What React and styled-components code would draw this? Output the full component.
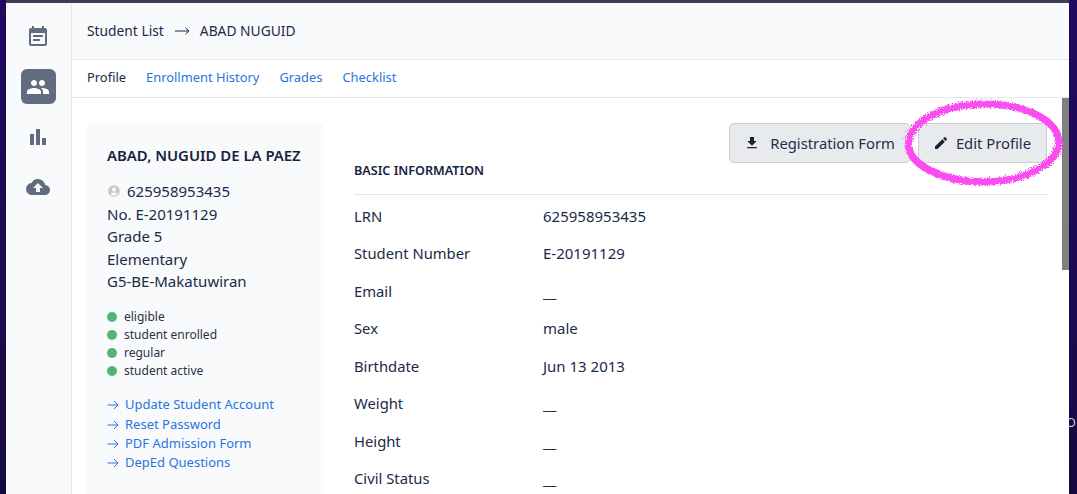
import React from 'react';
import styled, { createGlobalStyle } from 'styled-components';
import { MdEventNote, MdPeople, MdBarChart, MdCloudUpload, MdFileDownload, MdEdit, MdAccountCircle } from 'react-icons/md';

const GlobalStyle = createGlobalStyle`
  html, body {
    margin: 0;
    height: 100%;
    overflow: hidden;
    background: #1f0a55;
    font-family: "Noto Sans", "Open Sans", sans-serif;
    color: #1a2b47;
  }
  * { box-sizing: border-box; }
`;

const Desktop = styled.div`
  width: 1077px;
  height: 494px;
  position: relative;
  overflow: hidden;
  background: linear-gradient(180deg, #22085f 0%, #1c0a50 60%, #16093f 100%);
`;

const TopStrip = styled.div`
  height: 3px;
  margin: 0 8px 0 6px;
  background: #453a55;
`;

const Window = styled.div`
  display: flex;
  width: 1063px;
  height: 491px;
  margin-left: 6px;
  background: #fff;
`;

const Sidebar = styled.nav`
  width: 66px;
  flex-shrink: 0;
  background: #f9fafc;
  border-right: 1px solid #e6e7eb;
  display: flex;
  flex-direction: column;
  align-items: center;
  gap: 15px;
  padding-top: 16px;
  padding-right: 1px;
`;

const SideItem = styled.div`
  width: 35px;
  height: 35px;
  border-radius: 6px;
  display: flex;
  align-items: center;
  justify-content: center;
  color: ${p => (p.$active ? '#fff' : '#626c7f')};
  background: ${p => (p.$active ? '#626c7f' : 'transparent')};
  font-size: 24px;
`;

const Main = styled.div`
  flex: 1;
  min-width: 0;
  display: flex;
  flex-direction: column;
`;

const Header = styled.header`
  height: 57px;
  flex-shrink: 0;
  background: #f9fafc;
  border-bottom: 1px solid #e6e7eb;
  display: flex;
  align-items: center;
  padding: 0 15px 2px;
  font-size: 13.8px;
`;

const Arrow = styled.svg`
  width: 15px;
  height: 10px;
  margin: 2px 10px 0 11px;
  color: #1a2b47;
`;

const Tabs = styled.div`
  height: 38px;
  flex-shrink: 0;
  border-bottom: 1px solid #e6e7eb;
  display: flex;
  align-items: center;
  gap: 20px;
  padding: 0 15px 4px;
  font-size: 12.9px;
`;

const Tab = styled.a`
  color: ${p => (p.$active ? '#1a2b47' : '#2b74e0')};
`;

const Content = styled.div`
  flex: 1;
  min-height: 0;
  position: relative;
  display: flex;
  gap: 30px;
  padding: 25px 0 0 15px;
  overflow: hidden;
`;

const Card = styled.aside`
  width: 237px;
  height: 420px;
  flex-shrink: 0;
  background: #f9fafc;
  border-radius: 6px;
  padding: 0 20px;
`;

const CardName = styled.h2`
  margin: 22px 0 15px;
  font-size: 14.9px;
  line-height: 20px;
  font-weight: 600;
  color: #14233c;
`;

const InfoLine = styled.div`
  display: flex;
  align-items: center;
  font-size: 15px;
  line-height: 22.5px;
`;

const LrnIcon = styled(MdAccountCircle)`
  font-size: 14px;
  color: #c5c8ce;
  margin-right: 6px;
`;

const Badges = styled.ul`
  list-style: none;
  margin: 15px 0 0;
  padding: 0;
  display: flex;
  flex-direction: column;
`;

const Badge = styled.li`
  display: flex;
  align-items: center;
  gap: 7px;
  height: 18px;
  font-size: 12px;
  color: #2a3242;
  &::before {
    content: '';
    width: 10px;
    height: 10px;
    border-radius: 50%;
    background: #4fb774;
  }
`;

const Actions = styled.div`
  margin-top: 15px;
  display: flex;
  flex-direction: column;
`;

const ActionLink = styled.a`
  display: flex;
  align-items: center;
  gap: 6px;
  height: 19.4px;
  font-size: 13px;
  color: #2b74e0;
`;

const SmallArrow = styled.svg`
  width: 12px;
  height: 10px;
  margin-top: 2px;
  color: #2b74e0;
`;

const Details = styled.section`
  width: 693px;
  flex-shrink: 0;
`;

const ButtonRow = styled.div`
  display: flex;
  justify-content: flex-end;
  gap: 7px;
  height: 40px;
`;

const Button = styled.button`
  height: 40px;
  display: flex;
  align-items: center;
  gap: ${p => p.$gap}px;
  padding: 0 15px 0 14px;
  background: #e9eaee;
  border: 1px solid #c9ccd2;
  border-radius: 5px;
  font-family: inherit;
  font-size: 14.8px;
  color: #1f2f4b;
  svg { font-size: 16px; color: #14233c; }
`;

const SectionTitle = styled.h3`
  margin: -1px 0 0;
  height: 33px;
  border-bottom: 1px solid #e4e5e8;
  font-size: 12.6px;
  line-height: 17px;
  font-weight: 600;
  color: #14233c;
`;

const Rows = styled.div`
  padding-top: 2px;
`;

const Row = styled.div`
  display: grid;
  grid-template-columns: 189px 1fr;
  height: 37.5px;
  align-items: center;
  font-size: 14.8px;
`;

const Value = styled.div`
  font-size: 15px;
  transform: translateY(${p => (p.$empty ? '1px' : '0')});
`;

const Scrollbar = styled.div`
  position: absolute;
  top: 0;
  right: 0;
  width: 7px;
  height: 172px;
  background: #808080;
`;

const Scribble = styled.svg`
  position: absolute;
  left: 895px;
  top: 90px;
  width: 180px;
  height: 105px;
  pointer-events: none;
`;

const EdgeGlyph = styled.span`
  position: absolute;
  left: 1069px;
  top: 414px;
  width: 7px;
  font-size: 13px;
  line-height: 16px;
  overflow: hidden;
  color: #c8c6cf;
  direction: rtl;
`;

const rows = [
  ['LRN', '625958953435'],
  ['Student Number', 'E-20191129'],
  ['Email', null],
  ['Sex', 'male'],
  ['Birthdate', 'Jun 13 2013'],
  ['Weight', null],
  ['Height', null],
  ['Civil Status', null],
];

const badges = ['eligible', 'student enrolled', 'regular', 'student active'];
const links = ['Update Student Account', 'Reset Password', 'PDF Admission Form', 'DepEd Questions'];

const App = () => {
  return (
    <Desktop>
      <GlobalStyle />
      <TopStrip />
      <Window>
        <Sidebar>
          <SideItem><MdEventNote /></SideItem>
          <SideItem $active><MdPeople /></SideItem>
          <SideItem><MdBarChart /></SideItem>
          <SideItem><MdCloudUpload /></SideItem>
        </Sidebar>
        <Main>
          <Header>
            Student List
            <Arrow viewBox="0 0 15 10" fill="none" stroke="currentColor" strokeWidth="1">
              <path d="M0 5h14M10.5 1.8 14 5l-3.5 3.2" />
            </Arrow>
            ABAD NUGUID
          </Header>
          <Tabs>
            <Tab $active>Profile</Tab>
            <Tab>Enrollment History</Tab>
            <Tab>Grades</Tab>
            <Tab>Checklist</Tab>
          </Tabs>
          <Content>
            <Card>
              <CardName>ABAD, NUGUID DE LA PAEZ</CardName>
              <InfoLine><LrnIcon />625958953435</InfoLine>
              <InfoLine>No. E-20191129</InfoLine>
              <InfoLine>Grade 5</InfoLine>
              <InfoLine>Elementary</InfoLine>
              <InfoLine>G5-BE-Makatuwiran</InfoLine>
              <Badges>
                {badges.map(b => <Badge key={b}>{b}</Badge>)}
              </Badges>
              <Actions>
                {links.map(l => (
                  <ActionLink key={l}>
                    <SmallArrow viewBox="0 0 12 10" fill="none" stroke="currentColor" strokeWidth="1">
                      <path d="M0.5 5h10.5M7 1l4 4-4 4" />
                    </SmallArrow>
                    {l}
                  </ActionLink>
                ))}
              </Actions>
            </Card>
            <Details>
              <ButtonRow>
                <Button $gap={10}><MdFileDownload />Registration Form</Button>
                <Button $gap={7}><MdEdit />Edit Profile</Button>
              </ButtonRow>
              <SectionTitle>BASIC INFORMATION</SectionTitle>
              <Rows>
                {rows.map(([label, value]) => (
                  <Row key={label}>
                    <div>{label}</div>
                    <Value $empty={!value}>{value || '__'}</Value>
                  </Row>
                ))}
              </Rows>
            </Details>
            <Scrollbar />
          </Content>
        </Main>
      </Window>
      <Scribble viewBox="0 0 180 105">
        <defs>
          <filter id="rough" x="-10%" y="-10%" width="120%" height="120%">
            <feTurbulence type="fractalNoise" baseFrequency="0.7" numOctaves="2" seed="4" />
            <feDisplacementMap in="SourceGraphic" scale="6" />
          </filter>
        </defs>
        <g fill="none" stroke="#f94df0" filter="url(#rough)">
          <ellipse cx="88.5" cy="53" rx="75" ry="39" strokeWidth="7" transform="rotate(-1 88 53)" />
          <ellipse cx="89.5" cy="52.5" rx="76" ry="38" strokeWidth="4" transform="rotate(1 89 52)" />
        </g>
      </Scribble>
      <EdgeGlyph>O</EdgeGlyph>
    </Desktop>
  );
};

export default App;
